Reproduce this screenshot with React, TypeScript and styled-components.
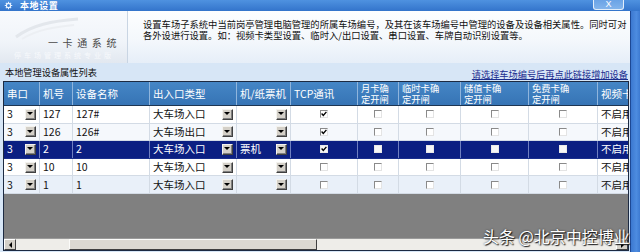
import React from "react";
import styled, { createGlobalStyle } from "styled-components";

const FONT = `"Noto Sans CJK SC", "Liberation Sans", sans-serif`;

const Global = createGlobalStyle`
  html, body { margin: 0; padding: 0; width: 640px; height: 252px; overflow: hidden; background: #d7e6f6; }
  #root { width: 640px; height: 252px; }
  * { box-sizing: border-box; }
`;

const COLS = "36px 33px 77px 87px 54px 67px 41px 62px 68px 69px 30px";

const Window = styled.div`
  position: relative;
  width: 640px;
  height: 252px;
  display: flex;
  flex-direction: column;
  background: #d7e6f6;
  font-family: ${FONT};
  overflow: hidden;
`;

const TitleBar = styled.div`
  height: 11px;
  flex: none;
  display: flex;
  align-items: flex-start;
  padding-left: 4px;
  background: linear-gradient(to bottom, #4f92e0, #3374cb);
`;

const TitleText = styled.span`
  margin-left: 7px;
  color: #fff;
  font-weight: bold;
  font-size: 9px;
  line-height: 11px;
  letter-spacing: 0.6px;
`;

const CloseButton = styled.div`
  margin-left: auto;
  margin-right: 16px;
  width: 31px;
  height: 10px;
  border: 1px solid rgba(255, 255, 255, 0.8);
  border-top: none;
  border-radius: 0 0 3px 3px;
  background: linear-gradient(to bottom, #6aa3e6, #82b4ec);
  color: #fff;
  font-family: "Liberation Sans", sans-serif;
  font-size: 9px;
  line-height: 9px;
  text-align: center;
`;

const Body = styled.div`
  flex: 1;
  display: flex;
  min-height: 0;
`;

const Main = styled.div`
  flex: 1;
  display: flex;
  flex-direction: column;
  min-width: 0;
`;

const RightFrame = styled.div`
  width: 10px;
  flex: none;
  border-left: 1px solid #1d4894;
  background: linear-gradient(to right, #3c78d0, #4d8ce0 60%, #3d7ad2);
`;

const Banner = styled.div`
  height: 52px;
  flex: none;
  display: flex;
  background: linear-gradient(to bottom, #fdfeff 0%, #f4f8fc 55%, #e6eef8 100%);
`;

const LogoPanel = styled.div`
  position: relative;
  width: 128px;
  flex: none;
  border-right: 1px solid #c9d5e3;
  background: linear-gradient(to bottom, #f8fafd 0%, #f0f4f9 60%, #e2e8f0 100%);
`;

const LogoText = styled.div`
  position: absolute;
  left: 48px;
  top: 25px;
  font-size: 10px;
  line-height: 13px;
  letter-spacing: 4.6px;
  color: #4a4a4a;
  white-space: nowrap;
`;

const LogoSub = styled.div`
  position: absolute;
  left: 14px;
  top: 40px;
  font-size: 7px;
  line-height: 9px;
  letter-spacing: 3px;
  color: #f7f9fc;
  white-space: nowrap;
`;

const Description = styled.div`
  padding: 8px 0 0 15px;
  font-size: 9.3px;
  line-height: 11px;
  color: #111;
  white-space: nowrap;
`;

const ListBar = styled.div`
  height: 18px;
  flex: none;
  display: flex;
  align-items: center;
  justify-content: space-between;
  padding: 0 2px 0 5px;
`;

const ListTitle = styled.span`
  font-size: 9.2px;
  line-height: 12px;
  color: #111;
  margin-top: -1px;
`;

const AddLink = styled.a`
  font-size: 9.2px;
  line-height: 12px;
  color: #1b2d8f;
  text-decoration: underline;
  margin-top: 3px;
`;

const FrameWrap = styled.div`
  flex: 1;
  display: flex;
  min-height: 0;
  padding: 0 1px 1px 3px;
`;

const Frame = styled.div`
  flex: 1;
  display: flex;
  flex-direction: column;
  border: 1px solid #1c2a42;
  background: #808080;
  overflow: hidden;
`;

const HeaderRow = styled.div`
  height: 24px;
  flex: none;
  display: grid;
  grid-template-columns: ${COLS};
  background: linear-gradient(to bottom, #4586c6, #3674b5);
  border-bottom: 1px solid #1d3552;
`;

const HeadCell = styled.div<{ $two?: boolean }>`
  border-right: 1px solid #8fb5dd;
  color: #fff;
  overflow: hidden;
  white-space: nowrap;
  padding-left: 3px;
  font-size: ${(p) => (p.$two ? 9.3 : 10.5)}px;
  line-height: ${(p) => (p.$two ? 10.5 : 14)}px;
  display: flex;
  flex-direction: column;
  justify-content: ${(p) => (p.$two ? "flex-start" : "center")};
  padding-top: ${(p) => (p.$two ? 1 : 0)}px;
  &:last-child {
    border-right: none;
  }
`;

const HeadLine = styled.span`
  display: block;
  height: 10.5px;
`;

const Row = styled.div<{ $bg: string; $sel?: boolean }>`
  height: 17.6px;
  flex: none;
  display: grid;
  grid-template-columns: ${COLS};
  background: ${(p) => p.$bg};
  color: ${(p) => (p.$sel ? "#fff" : "#111")};
  border-bottom: 1px solid ${(p) => (p.$sel ? "#1a2f8e" : "#d3dbe5")};
`;

const Cell = styled.div<{ $center?: boolean; $sel?: boolean }>`
  display: flex;
  align-items: center;
  justify-content: ${(p) => (p.$center ? "center" : "flex-start")};
  padding-left: ${(p) => (p.$center ? 0 : 3)}px;
  border-right: 1px solid ${(p) => (p.$sel ? "#6f7fc0" : "#d3dbe5")};
  overflow: hidden;
  white-space: nowrap;
  font-size: 10.5px;
  line-height: 14px;
  &:last-child {
    border-right: none;
  }
`;

const CellText = styled.span`
  flex: 1;
  min-width: 0;
`;

const DropButton = styled.div`
  width: 11px;
  height: 11px;
  flex: none;
  margin-right: 3px;
  background: #d4d0c8;
  border-top: 1px solid #f4f3ef;
  border-left: 1px solid #f4f3ef;
  border-right: 1px solid #404040;
  border-bottom: 1px solid #404040;
  box-shadow: inset -1px -1px 0 #808080;
  display: flex;
  align-items: center;
  justify-content: center;
  &::after {
    content: "";
    display: block;
    width: 0;
    height: 0;
    margin: 0 1px 1px 0;
    border-left: 3px solid transparent;
    border-right: 3px solid transparent;
    border-top: 3px solid #000;
  }
`;

const CheckBox = styled.div<{ $sel?: boolean }>`
  width: 8px;
  height: 8px;
  background: ${(p) => (p.$sel ? "#f6f6f6" : "#fff")};
  border-top: 1px solid ${(p) => (p.$sel ? "#e8e8e8" : "#8a8a8a")};
  border-left: 1px solid ${(p) => (p.$sel ? "#e8e8e8" : "#8a8a8a")};
  border-right: 1px solid ${(p) => (p.$sel ? "#e8e8e8" : "#e4e4e4")};
  border-bottom: 1px solid ${(p) => (p.$sel ? "#e8e8e8" : "#e4e4e4")};
  display: flex;
  align-items: center;
  justify-content: center;
`;

const GrayArea = styled.div`
  flex: 1;
  background: #808080;
`;

const ScrollBar = styled.div`
  height: 12px;
  flex: none;
  display: flex;
  background: #eeede9;
  border-top: 1px solid #9a9a9a;
`;

const ScrollArrow = styled.div<{ $dir: "left" | "right" }>`
  width: 12px;
  flex: none;
  background: #d4d0c8;
  border-top: 1px solid #fff;
  border-left: 1px solid #fff;
  border-right: 1px solid #404040;
  border-bottom: 1px solid #404040;
  display: flex;
  align-items: center;
  justify-content: center;
  &::after {
    content: "";
    display: block;
    width: 0;
    height: 0;
    border-top: 3px solid transparent;
    border-bottom: 3px solid transparent;
    ${(p) => (p.$dir === "left" ? "border-right: 3px solid #000;" : "border-left: 3px solid #000;")}
  }
`;

const Track = styled.div`
  flex: 1;
  display: flex;
`;

const Thumb = styled.div`
  margin-left: 53px;
  width: 248px;
  background: #dcd9d2;
  border-top: 1px solid #fbfbf9;
  border-left: 1px solid #fbfbf9;
  border-right: 1px solid #404040;
  border-bottom: 1px solid #404040;
`;

const Watermark = styled.div`
  position: absolute;
  left: 483px;
  top: 225px;
  font-family: ${FONT};
  font-size: 16px;
  line-height: 22px;
  color: #fff;
  white-space: nowrap;
  text-shadow: 1px 1px 1px #1a1a1a, 0 0 2px #333;
`;

function GearIcon() {
  return (
    <svg width="9" height="9" viewBox="0 0 18 18" style={{ marginTop: 1 }}>
      <g stroke="#e8f2ff" strokeWidth="2.2" fill="none">
        <circle cx="9" cy="9" r="4.2" />
        <path d="M9 1.5v3M9 13.5v3M1.5 9h3M13.5 9h3M3.7 3.7l2.1 2.1M12.2 12.2l2.1 2.1M3.7 14.3l2.1-2.1M12.2 5.8l2.1-2.1" />
      </g>
    </svg>
  );
}

function CheckMark() {
  return (
    <svg width="6" height="6" viewBox="0 0 6 6">
      <path d="M0.6 2.6 L2.3 4.4 L5.4 0.9" stroke="#000" strokeWidth="1.4" fill="none" />
    </svg>
  );
}

function LogoSwoosh() {
  return (
    <svg width="70" height="26" viewBox="0 0 70 26" style={{ position: "absolute", left: 12, top: 4 }}>
      <path d="M4 22 C 20 10, 40 6, 66 4" stroke="#e3e7ec" strokeWidth="3" fill="none" />
      <path d="M10 24 C 26 14, 44 12, 62 10" stroke="#eceff3" strokeWidth="2" fill="none" />
    </svg>
  );
}

type RowData = {
  port: string;
  no: string;
  name: string;
  type: string;
  ticket: string;
  tcp: boolean;
  sel?: boolean;
  bg: string;
};

const rows: RowData[] = [
  { port: "3", no: "127", name: "127#", type: "大车场入口", ticket: "", tcp: true, bg: "#ffffff" },
  { port: "3", no: "126", name: "126#", type: "大车场出口", ticket: "", tcp: true, bg: "#f5f8fc" },
  { port: "3", no: "2", name: "2", type: "大车场入口", ticket: "票机", tcp: true, sel: true, bg: "#0b1f82" },
  { port: "3", no: "10", name: "10", type: "大车场入口", ticket: "", tcp: false, bg: "#ffffff" },
  { port: "3", no: "1", name: "1", type: "大车场入口", ticket: "", tcp: false, bg: "#e9f0f9" },
];

function DataRow({ r }: { r: RowData }) {
  const sel = !!r.sel;
  return (
    <Row $bg={r.bg} $sel={sel}>
      <Cell $sel={sel}>
        <CellText>{r.port}</CellText>
        <DropButton />
      </Cell>
      <Cell $sel={sel}>{r.no}</Cell>
      <Cell $sel={sel}>{r.name}</Cell>
      <Cell $sel={sel}>
        <CellText>{r.type}</CellText>
        <DropButton />
      </Cell>
      <Cell $sel={sel}>
        <CellText>{r.ticket}</CellText>
        <DropButton />
      </Cell>
      <Cell $center $sel={sel}>
        <CheckBox $sel={sel}>{r.tcp && <CheckMark />}</CheckBox>
      </Cell>
      <Cell $center $sel={sel}>
        <CheckBox $sel={sel} />
      </Cell>
      <Cell $center $sel={sel}>
        <CheckBox $sel={sel} />
      </Cell>
      <Cell $center $sel={sel}>
        <CheckBox $sel={sel} />
      </Cell>
      <Cell $center $sel={sel}>
        <CheckBox $sel={sel} />
      </Cell>
      <Cell $sel={sel}>不启用</Cell>
    </Row>
  );
}

export default function App() {
  return (
    <>
      <Global />
      <Window>
        <TitleBar>
          <GearIcon />
          <TitleText>本地设置</TitleText>
          <CloseButton>X</CloseButton>
        </TitleBar>
        <Body>
          <Main>
            <Banner>
              <LogoPanel>
                <LogoSwoosh />
                <LogoText>一卡通系统</LogoText>
                <LogoSub>停车场管理系统专业版</LogoSub>
              </LogoPanel>
              <Description>
                <div>设置车场子系统中当前岗亭管理电脑管理的所属车场编号，及其在该车场编号中管理的设备及设备相关属性。同时可对</div>
                <div>各外设进行设置。如：视频卡类型设置、临时入/出口设置、串口设置、车牌自动识别设置等。</div>
              </Description>
            </Banner>
            <ListBar>
              <ListTitle>本地管理设备属性列表</ListTitle>
              <AddLink>请选择车场编号后再点此链接增加设备</AddLink>
            </ListBar>
            <FrameWrap>
              <Frame>
                <HeaderRow>
                  <HeadCell>串口</HeadCell>
                  <HeadCell>机号</HeadCell>
                  <HeadCell>设备名称</HeadCell>
                  <HeadCell>出入口类型</HeadCell>
                  <HeadCell>机/纸票机</HeadCell>
                  <HeadCell>TCP通讯</HeadCell>
                  <HeadCell $two>
                    <HeadLine>月卡确</HeadLine>
                    <HeadLine>定开闸</HeadLine>
                  </HeadCell>
                  <HeadCell $two>
                    <HeadLine>临时卡确</HeadLine>
                    <HeadLine>定开闸</HeadLine>
                  </HeadCell>
                  <HeadCell $two>
                    <HeadLine>储值卡确</HeadLine>
                    <HeadLine>定开闸</HeadLine>
                  </HeadCell>
                  <HeadCell $two>
                    <HeadLine>免费卡确</HeadLine>
                    <HeadLine>定开闸</HeadLine>
                  </HeadCell>
                  <HeadCell>视频卡类型</HeadCell>
                </HeaderRow>
                {rows.map((r, i) => (
                  <DataRow key={i} r={r} />
                ))}
                <GrayArea />
                <ScrollBar>
                  <ScrollArrow $dir="left" />
                  <Track>
                    <Thumb />
                  </Track>
                  <ScrollArrow $dir="right" />
                </ScrollBar>
              </Frame>
            </FrameWrap>
          </Main>
          <RightFrame />
        </Body>
        <Watermark>头条 @北京中控博业</Watermark>
      </Window>
    </>
  );
}
